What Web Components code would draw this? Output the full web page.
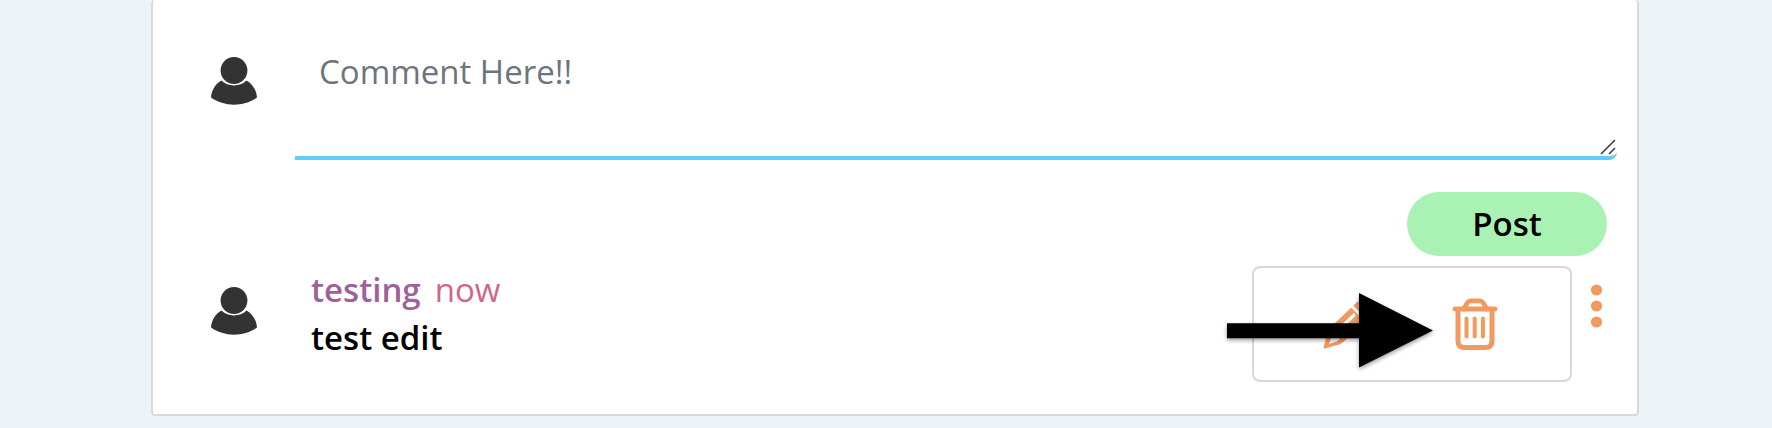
<!DOCTYPE html>
<html lang="en">
<head>
<meta charset="utf-8">
<title>Comments</title>
<style>
body { margin: 0; background: #eef3f7; font: 33px/48px "Open Sans", "Noto Sans", sans-serif; color: #000; }
</style>
</head>
<body>
<comment-card>
  <comment-form></comment-form>
  <comment-entry>
    <a slot="author" href="#testing">testing</a>
    <span slot="time">now</span>
    <span slot="body">test edit</span>
    <comment-menu slot="menu"></comment-menu>
  </comment-entry>
</comment-card>
<script>
const define = (name, html) => {
  const template = document.createElement('template');
  template.innerHTML = html;
  customElements.define(name, class extends HTMLElement {
    constructor() {
      super();
      this.attachShadow({ mode: 'open' }).append(template.content.cloneNode(true));
    }
  });
};

define('user-avatar', `
<style>:host { display: block; flex: none; width: 46px; height: 48px; } svg { display: block; }</style>
<svg width="46" height="48" viewBox="0 0 46 48" aria-hidden="true">
  <path fill="#333" d="M0 40.5C.5 32.500 5 26.500 10.500 23.500C17 30 29 30 35.500 23.500C41 26.500 45.500 32.500 46 40.500C33 50 13 50 0 40.500Z"/>
  <circle cx="23" cy="13.500" r="14.300" fill="#fff"/>
  <circle cx="23" cy="13.500" r="13.400" fill="#333"/>
</svg>`);

define('comment-card', `
<style>
:host { display: block; margin: 0 133px 12px 151px; padding-bottom: 32px; background: #fff;
  border: 2px solid #d9d9de; border-top: 0; border-radius: 4px; }
</style>
<slot></slot>`);

define('comment-form', `
<style>
:host { display: block; }
form { margin: 0; }
.field { display: flex; align-items: flex-start; gap: 38px; padding: 32px 20px 0 58px; }
user-avatar { margin-top: 25px; }
.box { position: relative; flex: 1; display: flex; }
textarea { flex: 1; min-width: 0; box-sizing: border-box; height: 128px; margin: 0; padding: 16px 24px 0;
  border: 0 solid #60ccfc; border-bottom-width: 4px; border-bottom-right-radius: 8px;
  outline: 0; resize: none; background: transparent; color: #000; font: inherit; }
textarea::placeholder { color: #6c757d; opacity: 1; }
.grip { position: absolute; right: 1px; bottom: 5px; }
.actions { display: flex; justify-content: flex-end; padding: 32px 30px 0 0; }
button { width: 200px; height: 64px; padding: 0; border: 0; border-radius: 32px; background: #a9f2b4; color: #000;
  font: inherit; font-weight: 600; }
</style>
<form>
  <div class="field">
    <user-avatar></user-avatar>
    <div class="box">
      <textarea aria-label="Comment" placeholder="Comment Here!!"></textarea>
      <svg class="grip" width="16" height="16" viewBox="0 0 16 16" fill="none" stroke="#444" stroke-width="1.700" aria-hidden="true"><path d="M1 15L15 1M9 15L15 9"/></svg>
    </div>
  </div>
  <div class="actions"><button type="button">Post</button></div>
</form>`);

define('comment-entry', `
<style>
:host { display: flex; align-items: flex-start; padding: 10px 34px 0 58px; }
user-avatar { margin-top: 21px; }
.text { flex: 1; margin-left: 54px; }
.head { display: flex; gap: 14px; }
::slotted([slot=author]) { color: #9f6199; font-weight: 600; text-decoration: none; }
::slotted([slot=time]) { color: #cf6688; }
::slotted([slot=body]) { font-weight: 600; }
.more { display: block; margin: 18px 0 0 18px; padding: 0; border: 0; background: none; }
.more svg { display: block; }
</style>
<user-avatar></user-avatar>
<div class="text">
  <div class="head"><slot name="author"></slot><slot name="time"></slot></div>
  <slot name="body"></slot>
</div>
<slot name="menu"></slot>
<button class="more" type="button" aria-label="More options">
  <svg width="13" height="44" viewBox="0 0 13 44" fill="#f2995f"><circle cx="6.500" cy="6" r="5.600"/><circle cx="6.500" cy="22" r="5.600"/><circle cx="6.500" cy="38" r="5.600"/></svg>
</button>`);

define('comment-menu', `
<style>
:host { position: relative; display: flex; align-items: center; justify-content: center; gap: 78px; box-sizing: border-box;
  width: 320px; height: 116px; padding-right: 4px; border: 2px solid #d8d8da; border-radius: 8px; background: #fff; }
button { display: block; padding: 0; border: 0; background: none; }
svg { display: block; }
.arrow { position: absolute; left: -27px; top: 22px; overflow: visible; filter: drop-shadow(0 2px 2px #0006); pointer-events: none; }
</style>
<button type="button" aria-label="Edit">
  <svg width="52" height="52" viewBox="0 0 52 52" stroke-linecap="round" stroke-linejoin="round">
    <path fill="#f2995f" stroke="#f2995f" stroke-width="2" d="M2.500 49.500L6.500 35Q8 31.500 12 27.500L36 4.500L47 16L25 39Q21 43.500 17 45.500Z"/>
    <path fill="#fff" d="M10 37L7 46L14.500 43.500Q17 42 19 39Z"/>
    <path fill="none" stroke="#fff" stroke-width="3.200" d="M17 31.500L32 17"/>
    <path fill="none" stroke="#fff" stroke-width="2.800" stroke-linecap="butt" d="M28 6.500L43 21.500"/>
  </svg>
</button>
<button type="button" aria-label="Delete">
  <svg width="46" height="52" viewBox="0 0 46 52" fill="none" stroke="#f2995f" stroke-linecap="round">
    <path stroke-width="4.800" d="M3 11H43"/>
    <path stroke-width="4.800" stroke-linejoin="round" d="M12 11C14 7 15.500 2.900 18.500 2.900H28C31 2.900 32.500 7 34.500 11"/>
    <path stroke-width="5" d="M6 12V43Q6 49.500 12.500 49.500H33.500Q40 49.500 40 43V12"/>
    <path stroke-width="4" d="M14.500 20.500V38.500M22.700 20.500V38.500M30.900 20.500V38.500"/>
  </svg>
</button>
<svg class="arrow" width="206" height="82" viewBox="0 0 206 82" aria-hidden="true"><path d="M0 33.300H132V3L206 40.500L132 77.500V48.300H0Z"/></svg>`);
</script>
</body>
</html>
